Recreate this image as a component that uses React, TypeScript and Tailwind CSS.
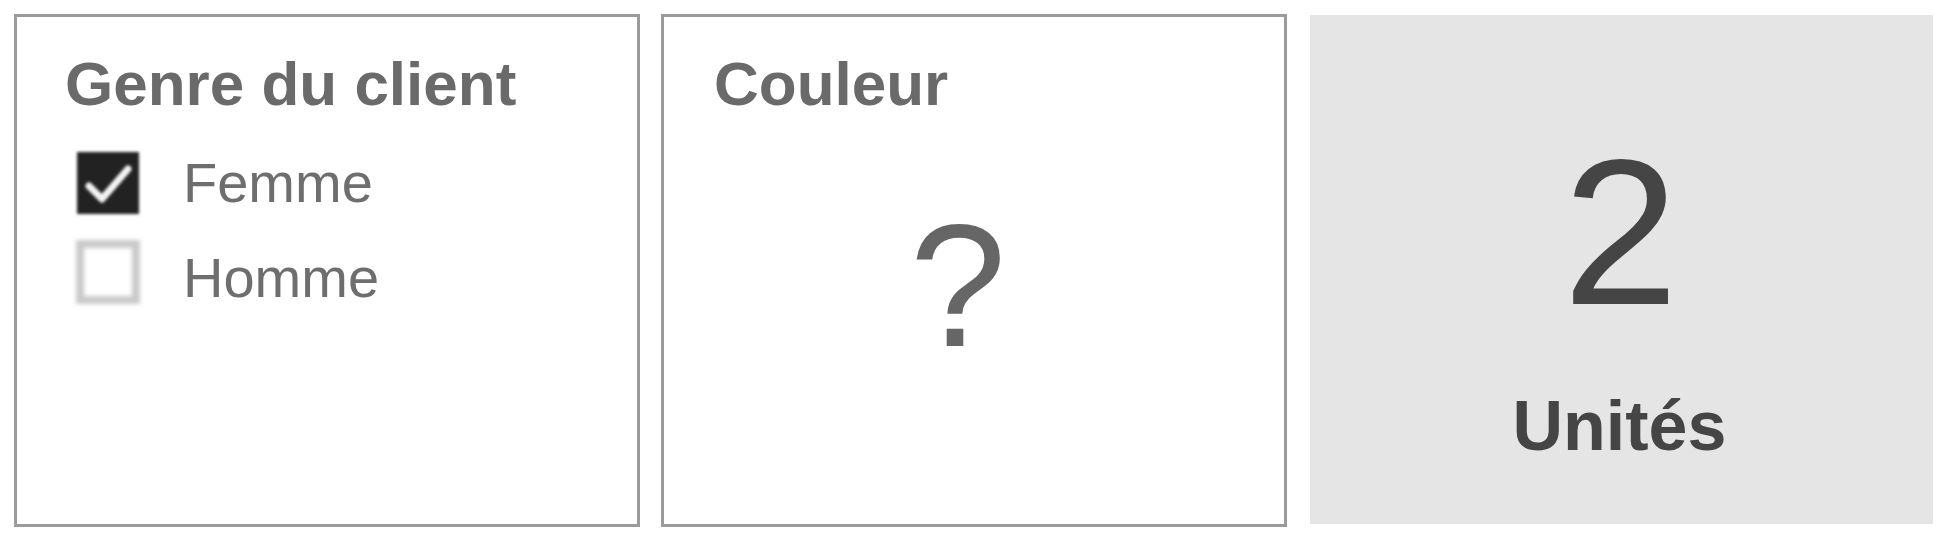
import React from "react";

function CheckedBox() {
  return (
    <div className="w-[62px] h-[62px] bg-[#222222] blur-[1.8px] flex items-center justify-center shrink-0">
      <svg width="62" height="62" viewBox="0 0 62 62">
        <path d="M12 34 L25 47 L51 17" fill="none" stroke="#f4f4f4" strokeWidth="7" strokeLinecap="round" strokeLinejoin="round" />
      </svg>
    </div>
  );
}

function EmptyBox() {
  return <div className="w-[64px] h-[64px] mb-[12px] border-[8px] border-[#c9c9c9] bg-white blur-[2px] shrink-0" />;
}

export default function App() {
  return (
    <div className="w-[1955px] h-[544px] bg-white flex items-start gap-[21px] pt-[14px] pl-[14px] font-['Liberation_Sans',Arial,sans-serif]">
      {/* Panel 1 */}
      <div className="w-[626px] h-[513px] border-[3px] border-[#9b9b9b] bg-white pt-[36px] pl-[48px] flex flex-col">
        <div className="text-[62px] leading-none font-bold text-[#6a6a6a]">Genre du client</div>
        <div className="mt-[40px] ml-[12px] flex flex-col gap-[39px]">
          <div className="flex items-center gap-[44px] h-[56px]">
            <CheckedBox />
            <span className="text-[56px] leading-none text-[#6e6e6e]">Femme</span>
          </div>
          <div className="flex items-center gap-[43px] h-[56px] -ml-[1px]">
            <EmptyBox />
            <span className="text-[56px] leading-none text-[#6e6e6e]">Homme</span>
          </div>
        </div>
      </div>

      {/* Panel 2 */}
      <div className="w-[626px] h-[513px] border-[3px] border-[#9b9b9b] bg-white pt-[36px] pl-[50px] flex flex-col">
        <div className="text-[62px] leading-none font-bold text-[#6a6a6a]">Couleur</div>
        <div className="mt-[84px] -ml-[50px] pr-[32px] text-center text-[174px] leading-none text-[#666666]">?</div>
      </div>

      {/* Panel 3 */}
      <div className="w-[623px] h-[509px] mt-[1px] ml-[2px] bg-[#e5e5e5] flex flex-col items-center pt-[113px]">
        <div className="pr-[2px] text-[208px] leading-none text-[#454545]">2</div>
        <div className="mt-[55px] pr-[4px] text-[70px] leading-none font-bold text-[#454545]">Unités</div>
      </div>
    </div>
  );
}
